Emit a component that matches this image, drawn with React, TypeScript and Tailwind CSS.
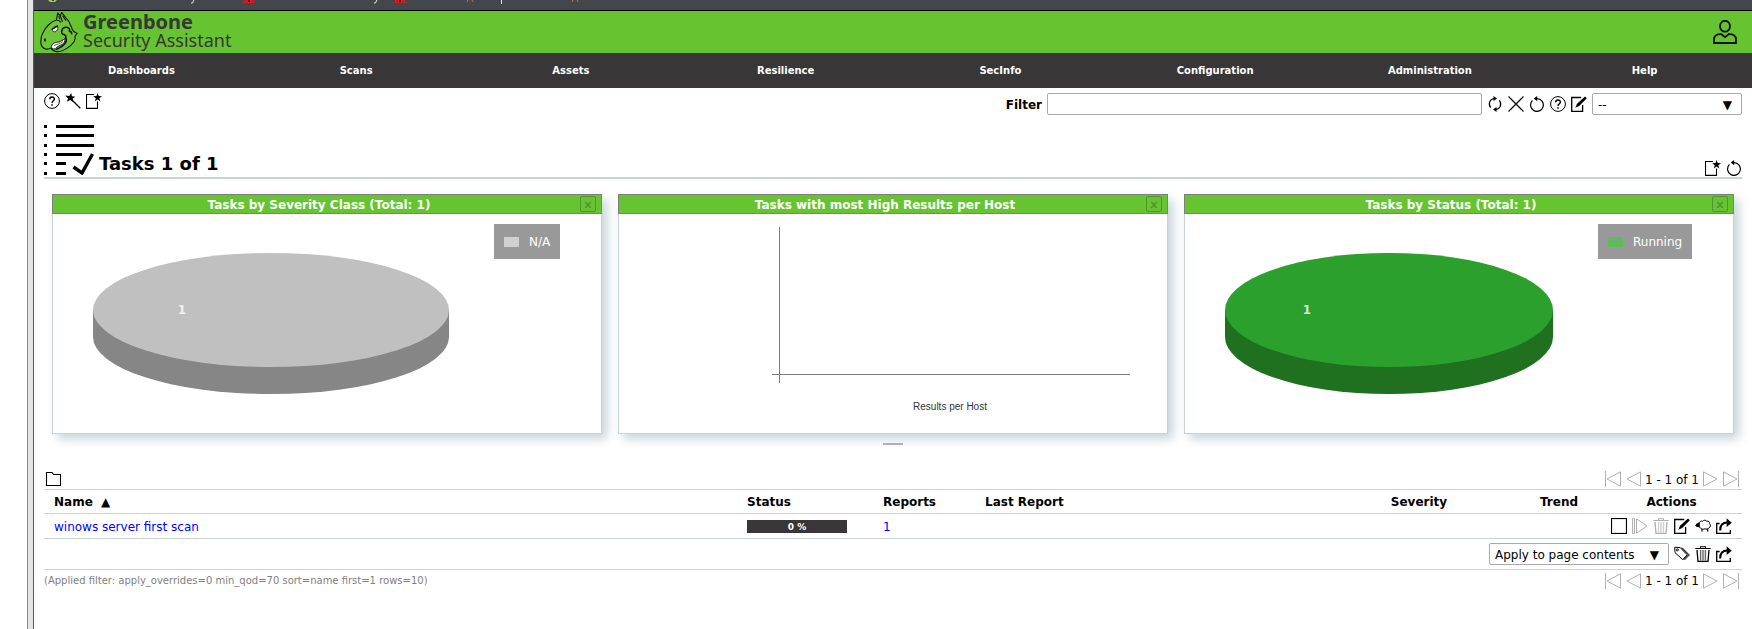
import React, { useState } from "react";

function Svg({ children, className = "size-4" }: { children: React.ReactNode; className?: string }) {
  return (
    <svg viewBox="0 0 16 16" className={`block shrink-0 ${className}`} fill="none" stroke="currentColor" strokeWidth="1" aria-hidden="true">
      {children}
    </svg>
  );
}

const HelpIcon = () => (
  <Svg>
    <circle cx="8" cy="8" r="7.4" />
    <path d="M5.7 6.3C5.7 3.2 10.4 3.3 10.4 6C10.4 7.8 8 7.9 8 10.1" strokeWidth="1.4" />
    <rect x="7.3" y="11.2" width="1.5" height="1.5" fill="currentColor" stroke="none" />
  </Svg>
);

const WizardIcon = () => (
  <Svg>
    <path d="M6.5 6.5L15.3 15.3" strokeWidth="1.3" />
    <path d="M6.2 0L6.9 3.2L10.4 3.8L7.6 5.6L8.4 9.2L5.3 7L1.8 8.8L3.1 5.4L0.2 2.6L4.2 3Z" fill="currentColor" stroke="none" />
  </Svg>
);

const StarShape = () => (
  <path d="M11.6 0L12.7 3.1L16 3.2L13.4 5.2L14.4 8.5L11.6 6.6L8.8 8.5L9.8 5.2L7.2 3.2L10.5 3.1Z" fill="currentColor" stroke="none" />
);

const NewIcon = () => (
  <Svg>
    <path d="M8 1.5H0.5V15.4H11.5V8.5" strokeWidth="1.1" />
    <StarShape />
  </Svg>
);

const RefreshIcon = () => (
  <Svg>
    <path d="M7.6 2.5C3 2.7 0.7 7.6 3.6 11.6M8.4 13.5C13 13.3 15.3 8.4 12.4 4.4" strokeWidth="1.2" />
    <path d="M6.5 0L10 2.4L6.5 5ZM9.5 11L6 13.6L9.5 16Z" fill="currentColor" stroke="none" />
  </Svg>
);

const CloseIcon = () => (
  <Svg>
    <path d="M0.5 0.5L15.5 15.5M15.5 0.5L0.5 15.5" strokeWidth="1.2" />
  </Svg>
);

const ResetIcon = () => (
  <Svg>
    <path d="M5.6 2.6H8A6.4 6.4 0 1 1 3.4 4.5" strokeWidth="1.2" />
    <path d="M8.2 0L4.8 2.6L8.2 5.2Z" fill="currentColor" stroke="none" />
  </Svg>
);

const EditIcon = () => (
  <Svg>
    <path d="M10.2 1.5H0.7V15.4H11.6V9" strokeWidth="1.3" />
    <path d="M4.4 11.7L6 7.8L14 0.4L15.8 2.2L8.2 9.9Z" fill="currentColor" stroke="none" />
  </Svg>
);

const UserIcon = () => (
  <svg viewBox="0 0 24 24" className="block size-6" fill="none" stroke="#111" strokeWidth="1.8" aria-hidden="true">
    <ellipse cx="12" cy="6.2" rx="5" ry="5.4" />
    <path d="M1 23V19.5C1 15.5 4 14 8.4 14.2L12 17.2L15.6 14.2C20 14 23 15.5 23 19.5V23Z" />
  </svg>
);

const TaskIcon = () => (
  <svg viewBox="0 0 50 51" className="block h-[51px] w-[50px] shrink-0" fill="#000" aria-hidden="true">
    {[1, 10, 20, 29, 38, 48].map((y) => (
      <rect key={y} x="0" y={y} width="3" height="3" />
    ))}
    {[1, 10, 20].map((y) => (
      <rect key={y} x="12" y={y} width="38" height="3" />
    ))}
    <rect x="12" y="29" width="26" height="3" />
    <rect x="12" y="38" width="10" height="3" />
    <rect x="12" y="48" width="10" height="3" />
    <path d="M29.5 43L38 49L48.5 30" fill="none" stroke="#000" strokeWidth="3.4" />
  </svg>
);

const FolderIcon = () => (
  <Svg>
    <path d="M1.5 14.5V1.5H7L8.6 3.5H15.5V14.5Z" strokeWidth="1.1" />
  </Svg>
);

const FirstIcon = () => (
  <Svg>
    <path d="M0.5 0V16M15.5 0.8V15.2L2 8Z" />
  </Svg>
);
const PrevIcon = () => (
  <Svg>
    <path d="M14.5 0.8V15.2L1 8Z" />
  </Svg>
);
const NextIcon = () => (
  <Svg>
    <path d="M1.5 0.8V15.2L15 8Z" />
  </Svg>
);
const LastIcon = () => (
  <Svg>
    <path d="M15.5 0V16M0.5 0.8V15.2L14 8Z" />
  </Svg>
);

const StopIcon = () => (
  <Svg>
    <rect x="0.5" y="0.5" width="15" height="15" strokeWidth="1.2" />
  </Svg>
);

const ResumeIcon = () => (
  <Svg>
    <path d="M0.5 0.5H2.5V15.5H0.5ZM4.5 0.8V15.2L15 8Z" />
  </Svg>
);

const TrashIcon = () => (
  <Svg>
    <path d="M0.3 2.5H15.7M5.5 2.5V0.7H10.5V2.5" strokeWidth="1.1" />
    <path d="M2 4L3 15.4H13L14 4" strokeWidth="1.3" />
    <path d="M5.6 4V14.5M8 4V14.5M10.4 4V14.5" strokeWidth="1.4" opacity="0.6" />
  </Svg>
);

const SheepIcon = () => (
  <Svg>
    <path d="M4 6C4 3.4 6.2 2.6 7.6 3.3C8.6 1.8 11 2 11.7 3.2C13.6 2.6 15 4.2 14.6 5.6C16 6.8 15.6 9.2 14 9.8C13 11.3 11 11.4 10 10.7C8.6 11.6 6.4 11.3 5.8 10C4.6 9.9 4 9 4 8.5" />
    <path d="M7 11V13.6M12.7 11V13.6" strokeWidth="1.2" />
    <path d="M0.2 7.6C1 5.8 2.6 4.6 4.6 4.8L5 8.6C3.4 9.6 1.4 9.4 0.2 7.6Z" fill="currentColor" stroke="none" />
  </Svg>
);

const ExportIcon = () => (
  <Svg>
    <path d="M3.6 5.5H0.7V15.4H14.3V12" strokeWidth="1.3" />
    <path d="M4.2 12.5C4 7 6.5 4.6 11.5 4.6" strokeWidth="2" />
    <path d="M10.6 0.3L15.8 4.7L10.6 9Z" fill="currentColor" stroke="none" />
  </Svg>
);

const TagIcon = () => (
  <Svg>
    <path d="M0.7 1.2L6.2 1.6L13.2 8.8L8.6 13.6L1 6.6Z" />
    <path d="M8.2 1.8L15.4 9L10.4 14M7.2 1.6L14.4 8.9L9.6 13.8" strokeWidth="0.9" />
    <circle cx="3.4" cy="3.9" r="1" />
  </Svg>
);

function IconButton({ label, children, className = "" }: { label: string; children: React.ReactNode; className?: string }) {
  return (
    <button type="button" aria-label={label} className={`block shrink-0 cursor-pointer ${className}`}>
      {children}
    </button>
  );
}

function DragonLogo() {
  return (
    <svg viewBox="0 0 40 42" className="block h-[42px] w-10 shrink-0" fill="none" stroke="#101410" strokeWidth="1.1" strokeLinejoin="round" aria-hidden="true">
      <path
        d="M0.8 31C0.8 27 1.4 24.6 2.8 22C4.4 18.6 6 16.4 8.4 14C10.6 11.8 13 10 16.4 9L17.7 1.8L20.4 5.2L21.6 1.3L28.4 9.8C30 12.4 30.6 14.4 31.6 16.6C32 18.4 33 19.6 33.8 20.6L37.2 22.4L35.2 24.6C35.4 27 35 29 33.8 31C31.8 34 29.6 36 26.6 37.4C23.4 39.4 20 41 16.6 40.6C14 40.4 12.4 39.4 11 36.9C9 38.2 7.4 38.4 5.6 38C2.6 37 0.8 34.6 0.8 31Z"
        fill="#6ec53a"
      />
      <path d="M16.4 9C18.4 9 20 10 21 11.4M20.4 5.2L22.6 10.8M18.8 5L19.8 8.4M22.6 4.6L26 9.6" />
      <path d="M21.8 19.6C22.4 17.4 24.4 16 26.8 16.2C29.4 16.6 30 18.6 29.4 20.4C31 20.2 32 21.4 31.6 23.4M21.8 19.6C21.4 22 22 23.4 23.8 23.6C25.4 23.8 26 24.8 25.8 26.6C26.8 28.6 26.4 30.6 25.2 32.2C23 35.4 19.6 37.2 16 38.6" strokeWidth="1.5" />
      <path d="M11.4 35.4C12.4 31.4 16 31.6 18.6 31C21.2 30.4 23 29 24.8 27.4C25.4 30 24.4 32.2 22 33.6C19.6 34.8 17.6 35.2 15.2 38C13 38.2 11.4 37.4 11.4 35.4Z" fill="#fff" strokeWidth="1" />
      <path d="M14 34.6C16.6 33.2 20.6 33 23 30.6" strokeWidth="0.7" />
      <path d="M12.4 18.4C13.4 16.2 15.4 15.2 17.6 15.8C18.2 17.8 17.4 19.8 15.2 20.8C13.4 21 12.4 20 12.4 18.4Z" fill="#fff" strokeWidth="0.8" />
      <path d="M11.6 18.6L17.8 14.6" strokeWidth="1.4" />
      <ellipse cx="5" cy="29" rx="1" ry="1.7" fill="#101410" stroke="none" />
    </svg>
  );
}

function BookmarkBar() {
  return (
    <div className="h-[11px] overflow-hidden border-b border-black bg-[#43464c]">
      <svg width="580" height="10" viewBox="34 0 580 10" className="block" aria-hidden="true">
        <path d="M48 0H57L55 2H50Z" fill="#8fce5a" />
        <path d="M52 0H54V1H52Z" fill="#43464c" />
        <path d="M194 0L192.4 3H191" stroke="#e8e8e8" fill="none" />
        <path d="M242 3L245 0H253L256 3Z" fill="#d81818" />
        <path d="M248 0H250V2H248Z" fill="#300" />
        <path d="M377 0L375.4 3H374" stroke="#e8e8e8" fill="none" />
        <path d="M393 3L396 0H404L407 3Z" fill="#d81818" />
        <path d="M399 0H401V2H399Z" fill="#300" />
        <path d="M468 0L467 2M472 0L473 2" stroke="#b9793a" />
        <path d="M501.5 0V4" stroke="#e8e8e8" />
        <path d="M573 0L572 2M577 0L578 2" stroke="#b9793a" />
      </svg>
    </div>
  );
}

const menu = ["Dashboards", "Scans", "Assets", "Resilience", "SecInfo", "Configuration", "Administration", "Help"];

function Select({ label, options, className }: { label: string; options: string[]; className: string }) {
  return (
    <div className={`relative ${className}`}>
      <select aria-label={label} className="block h-[22px] w-full appearance-none rounded-xs border border-[#aaa] bg-white pt-px pr-6 pl-[5px] text-[12px]">
        {options.map((o) => (
          <option key={o}>{o}</option>
        ))}
      </select>
      <span className="pointer-events-none absolute inset-y-0 right-2.5 flex items-center pt-px text-[12px]">▼</span>
    </div>
  );
}

function Panel({ title, children }: { title: string; children: React.ReactNode }) {
  return (
    <section className="min-w-0 flex-1 bg-white shadow-[5px_5px_10px_#c8d3d9]">
      <header className="flex h-5 items-center border border-[#7f7f7f] bg-[#66c430] px-[5px]">
        <h2 className="flex-1 pt-px text-center text-[12px] leading-4 font-bold text-white">{title}</h2>
        <button
          type="button"
          aria-label={`Remove ${title}`}
          className="flex size-4 items-center justify-center rounded-xs border border-[#4f9430] pt-0.5 text-[#4f9430]"
        >
          <svg viewBox="0 0 8 8" className="size-2" stroke="currentColor" strokeWidth="1.4" aria-hidden="true">
            <path d="M1.2 1L6.8 7M6.8 1L1.2 7" />
          </svg>
        </button>
      </header>
      <div className="border border-t-0 border-[#c8d3d9]">{children}</div>
    </section>
  );
}

type PieProps = { cx: number; rx: number; labelX: number; top: string; side: string; legend: string; legendWidth: number; swatch: string };

function PieChart({ cx, rx, labelX, top, side, legend, legendWidth, swatch }: PieProps) {
  const left = cx - rx;
  const right = cx + rx;
  const legendX = 507 - legendWidth;
  return (
    <svg viewBox="0 0 548 219" className="block w-full" role="img" aria-label={legend}>
      <path d={`M${left} 96V123A${rx} 57 0 0 0 ${right} 123V96Z`} fill={side} />
      <ellipse cx={cx} cy="96" rx={rx} ry="57" fill={top} />
      <text x={labelX} y="100" fontSize="12" fontWeight="bold" textAnchor="middle" fill="#fff" fillOpacity="0.8">
        1
      </text>
      <rect x={legendX} y="10" width={legendWidth} height="35" fill="#999" />
      <rect x={legendX + 10} y="23" width="15" height="10" fill={swatch} />
      <text x={legendX + 35} y="32" fontSize="12" fill="#fff">
        {legend}
      </text>
    </svg>
  );
}

function HostChart() {
  return (
    <svg viewBox="0 0 548 219" className="block w-full" role="img" aria-label="Results per Host">
      <path d="M160.5 13V169M153 160.5H511" stroke="#7a7a7a" strokeWidth="1" />
      <text x="331" y="196" fontSize="10" textAnchor="middle" fill="#333" fontFamily="Liberation Sans, sans-serif">
        Results per Host
      </text>
    </svg>
  );
}

function Pagination() {
  return (
    <nav aria-label="Pagination" className="flex h-4 items-center gap-[5px] pr-[3px] text-[#b0b0b0]">
      <IconButton label="First page">
        <FirstIcon />
      </IconButton>
      <IconButton label="Previous page">
        <PrevIcon />
      </IconButton>
      <span className="-mx-0.5 pt-px text-[12px] text-black">1 - 1 of 1</span>
      <IconButton label="Next page">
        <NextIcon />
      </IconButton>
      <IconButton label="Last page">
        <LastIcon />
      </IconButton>
    </nav>
  );
}

export default function App() {
  const [filter, setFilter] = useState("");
  return (
    <div className="flex min-h-screen bg-white pl-[27px] font-['DejaVu_Sans',Verdana,sans-serif] text-[12px] leading-4 text-black">
      <div className="w-[7px] shrink-0 border-r border-l border-r-[#5a5a5a] border-l-[#8a8a8a] bg-[#e3e5e4]" />
      <div className="min-w-0 flex-1">
        <BookmarkBar />
        <header className="flex h-[42px] items-center justify-between bg-[#66c430] pr-[15px] pl-1.5">
          <a href="#home" className="flex items-center gap-[3px] text-[#393637]">
            <DragonLogo />
            <span className="flex flex-col pb-0.5 font-['Noto_Sans',sans-serif]">
              <span className="text-[20px] leading-[18px] font-bold">Greenbone</span>
              <span className="text-[18px] leading-[18px]">Security Assistant</span>
            </span>
          </a>
          <IconButton label="User">
            <UserIcon />
          </IconButton>
        </header>
        <nav aria-label="Main" className="grid h-[35px] grid-cols-8 items-center bg-[#393637] text-center text-[10px] font-bold text-white">
          {menu.map((m) => (
            <a key={m} href={`#${m.toLowerCase()}`}>
              {m}
            </a>
          ))}
        </nav>

        <main className="px-2.5 pt-[5px]">
          <div className="flex items-start justify-between">
            <div className="flex gap-[5px]">
              <IconButton label="Help: Tasks">
                <HelpIcon />
              </IconButton>
              <IconButton label="Task wizard">
                <WizardIcon />
              </IconButton>
              <IconButton label="New task">
                <NewIcon />
              </IconButton>
            </div>
            <div className="flex items-center gap-[5px]">
              <label htmlFor="filter" className="pt-px font-bold">
                Filter
              </label>
              <input
                id="filter"
                value={filter}
                onChange={(e) => setFilter(e.target.value)}
                className="h-[22px] w-[435px] rounded-xs border border-[#aaa] bg-white px-1.5 text-[12px]"
              />
              <IconButton label="Update filter">
                <RefreshIcon />
              </IconButton>
              <IconButton label="Remove filter">
                <CloseIcon />
              </IconButton>
              <IconButton label="Reset filter">
                <ResetIcon />
              </IconButton>
              <IconButton label="Help: Powerfilter">
                <HelpIcon />
              </IconButton>
              <IconButton label="Edit filter">
                <EditIcon />
              </IconButton>
              <Select label="Saved filter" options={["--"]} className="w-[150px]" />
            </div>
          </div>

          <div className="mt-[9px] flex items-end justify-between border-b-2 border-[#c8d3d9]">
            <div className="flex items-end gap-[5px] pb-0.5">
              <TaskIcon />
              <h1 className="text-[18px] leading-[22px] font-bold">Tasks 1 of 1</h1>
            </div>
            <div className="flex gap-[5px] pb-px">
              <IconButton label="Add dashboard display">
                <NewIcon />
              </IconButton>
              <IconButton label="Reset dashboard">
                <ResetIcon />
              </IconButton>
            </div>
          </div>

          <div className="flex gap-4 px-2 pt-[15px] pb-[9px]">
            <Panel title="Tasks by Severity Class (Total: 1)">
              <PieChart cx={218} rx={178} labelX={129} top="#c0c0c0" side="#868686" legend="N/A" legendWidth={66} swatch="#d0d0d0" />
            </Panel>
            <Panel title="Tasks with most High Results per Host">
              <HostChart />
            </Panel>
            <Panel title="Tasks by Status (Total: 1)">
              <PieChart cx={204} rx={164} labelX={122} top="#2ca02c" side="#1f701f" legend="Running" legendWidth={94} swatch="#61b861" />
            </Panel>
          </div>
          <div className="mx-auto h-0.5 w-5 bg-[#aaa]" />

          <div className="mt-[26px] flex items-center justify-between pb-0.5">
            <IconButton label="Toggle details" className="ml-px">
              <FolderIcon />
            </IconButton>
            <Pagination />
          </div>

          <table className="w-full table-fixed border-collapse text-left">
            <colgroup>
              <col />
              <col className="w-[136px]" />
              <col className="w-[102px]" />
              <col className="w-[346px]" />
              <col className="w-[196px]" />
              <col className="w-[84px]" />
              <col className="w-[141px]" />
            </colgroup>
            <thead>
              <tr className="h-6 border-y border-[#c8d3d9]">
                <th className="px-2.5">
                  Name <span className="ml-1">▲</span>
                </th>
                <th className="px-2.5">Status</th>
                <th className="px-2.5">Reports</th>
                <th className="px-2.5">Last Report</th>
                <th className="px-2.5 text-center">Severity</th>
                <th className="px-2.5 text-center">Trend</th>
                <th className="px-2.5 text-center">Actions</th>
              </tr>
            </thead>
            <tbody>
              <tr className="h-[25px] border-b border-[#c8d3d9]">
                <td className="px-2.5 pt-0.5">
                  <a href="#task" className="text-[#00f]">
                    winows server first scan
                  </a>
                </td>
                <td className="px-2.5 pt-px">
                  <div className="h-[13px] w-[100px] bg-[#393637] text-center text-[9px] leading-[14px] font-bold text-white">0 %</div>
                </td>
                <td className="px-2.5 pt-0.5">
                  <a href="#reports" className="text-[#00f]">
                    1
                  </a>
                </td>
                <td />
                <td />
                <td />
                <td className="pr-2.5">
                  <div className="flex justify-end gap-[5px]">
                    <IconButton label="Stop">
                      <StopIcon />
                    </IconButton>
                    <IconButton label="Resume" className="text-[#b0b0b0]">
                      <ResumeIcon />
                    </IconButton>
                    <IconButton label="Move to trashcan" className="text-[#b0b0b0]">
                      <TrashIcon />
                    </IconButton>
                    <IconButton label="Edit task">
                      <EditIcon />
                    </IconButton>
                    <IconButton label="Clone task">
                      <SheepIcon />
                    </IconButton>
                    <IconButton label="Export task">
                      <ExportIcon />
                    </IconButton>
                  </div>
                </td>
              </tr>
            </tbody>
            <tfoot>
              <tr className="h-[31px] border-b border-[#c8d3d9]">
                <td colSpan={7} className="pr-2.5">
                  <div className="flex items-center justify-end gap-[5px]">
                    <Select label="Apply to" options={["Apply to page contents"]} className="w-[180px]" />
                    <IconButton label="Add tag">
                      <TagIcon />
                    </IconButton>
                    <IconButton label="Move page contents to trashcan">
                      <TrashIcon />
                    </IconButton>
                    <IconButton label="Export page contents">
                      <ExportIcon />
                    </IconButton>
                  </div>
                </td>
              </tr>
            </tfoot>
          </table>

          <div className="flex items-center justify-between pt-0.5">
            <p className="pt-px text-[10px] text-[#7f7f7f]">(Applied filter: apply_overrides=0 min_qod=70 sort=name first=1 rows=10)</p>
            <Pagination />
          </div>
        </main>
      </div>
    </div>
  );
}
